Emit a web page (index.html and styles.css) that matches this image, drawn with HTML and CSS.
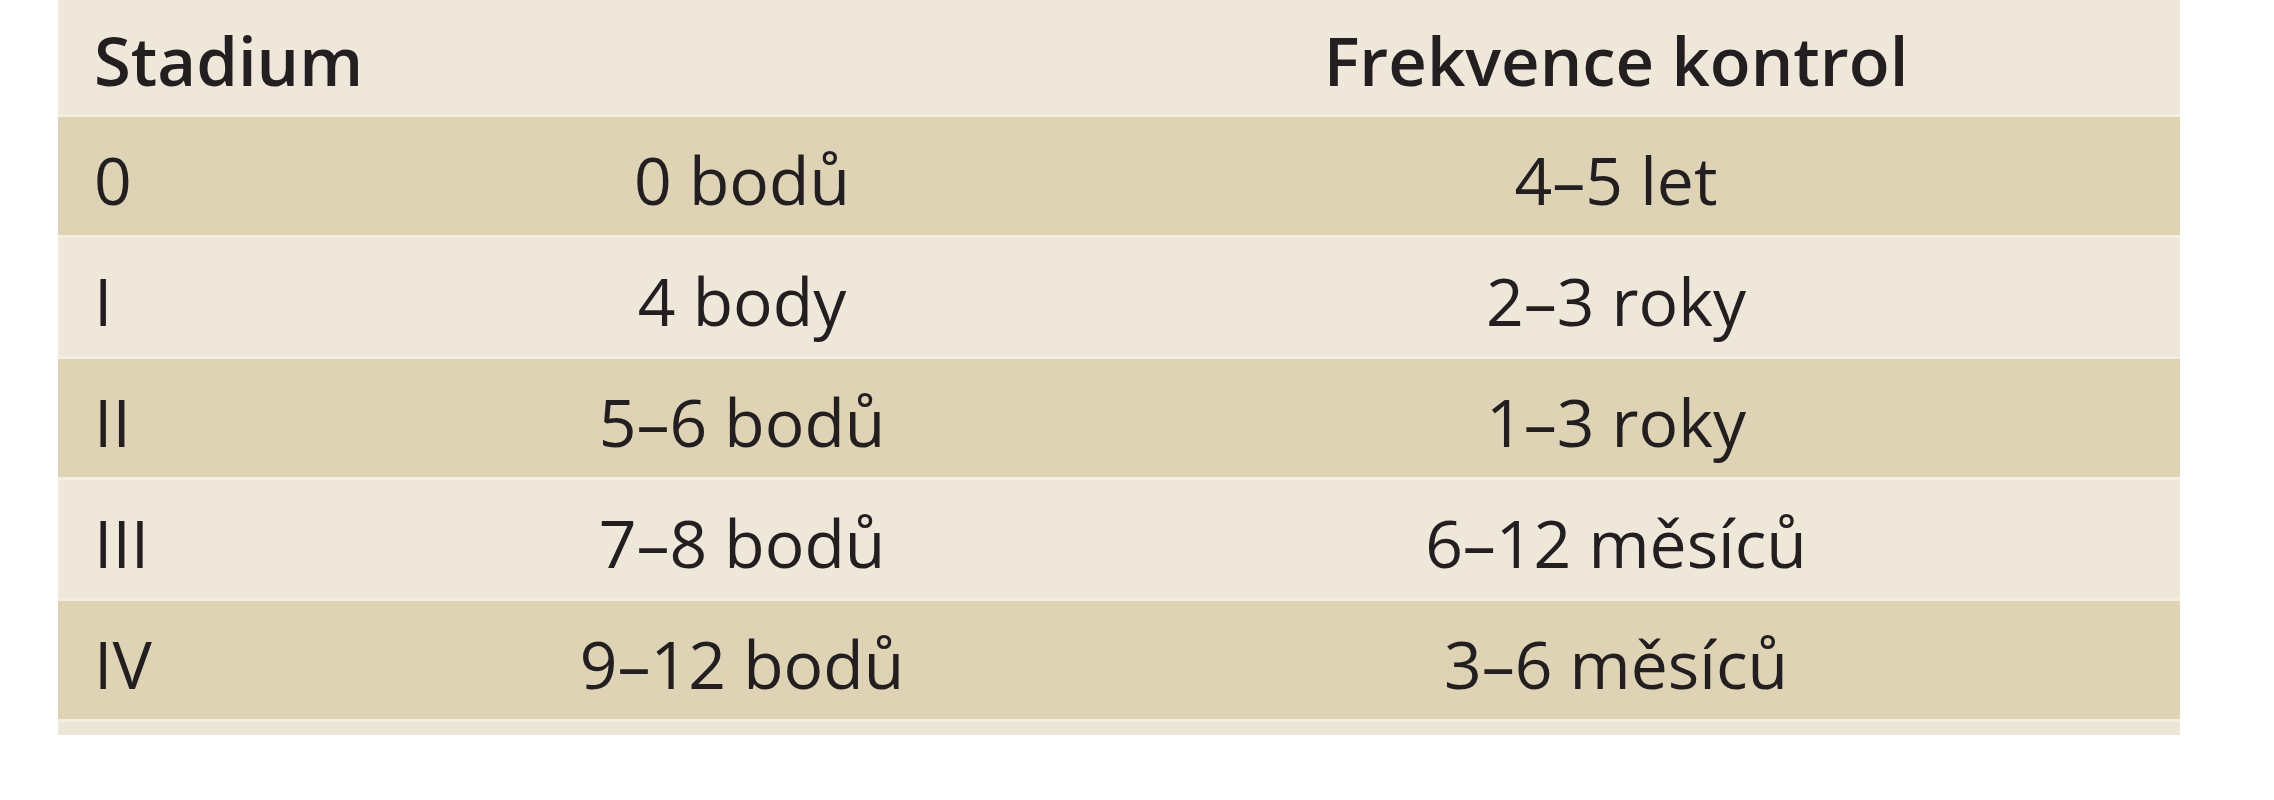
FILE: index.html
```html
<!DOCTYPE html>
<html lang="cs">
<head>
<meta charset="utf-8">
<title>Stadium – frekvence kontrol</title>
<link rel="stylesheet" href="styles.css">
</head>
<body>
<table class="grid">
  <colgroup>
    <col class="c1">
    <col class="c2">
    <col class="c3">
  </colgroup>
  <thead>
    <tr class="head">
      <th class="left">Stadium</th>
      <th></th>
      <th class="center">Frekvence kontrol</th>
    </tr>
  </thead>
  <tbody>
    <tr class="dark">
      <td class="left">0</td>
      <td class="center">0 bodů</td>
      <td class="center">4–5 let</td>
    </tr>
    <tr class="light">
      <td class="left">I</td>
      <td class="center">4 body</td>
      <td class="center">2–3 roky</td>
    </tr>
    <tr class="dark">
      <td class="left">II</td>
      <td class="center">5–6 bodů</td>
      <td class="center">1–3 roky</td>
    </tr>
    <tr class="light">
      <td class="left">III</td>
      <td class="center">7–8 bodů</td>
      <td class="center">6–12 měsíců</td>
    </tr>
    <tr class="dark">
      <td class="left">IV</td>
      <td class="center">9–12 bodů</td>
      <td class="center">3–6 měsíců</td>
    </tr>
    <tr class="foot">
      <td colspan="3"></td>
    </tr>
  </tbody>
</table>
</body>
</html>
```
FILE: styles.css
```css
html, body {
  margin: 0;
  padding: 0;
  background: #ffffff;
}

.grid {
  margin-left: 58px;
  width: 2122px;
  border-collapse: collapse;
  table-layout: fixed;
  font-family: "Open Sans", "Noto Sans", sans-serif;
  color: #231f20;
}

.c1 { width: 374px; }
.c2 { width: 620px; }
.c3 { width: 1128px; }

.grid th,
.grid td {
  padding: 8px 0 0 0;
  vertical-align: middle;
  white-space: nowrap;
  box-sizing: border-box;
}

.grid .left {
  text-align: left;
  padding-left: 36px;
}

.center {
  text-align: center;
}

.head th {
  height: 115px;
  background: #efe8da;
  font-size: 67px;
  font-weight: 600;
  line-height: 1.36;
}

.grid tbody td {
  height: 121px;
  border-top: 3px solid #f3eee2;
  font-size: 66px;
  font-weight: 400;
  line-height: 1.36;
}

.dark td {
  background: #ded3b5;
}

.light td {
  background: #efe8da;
}

.grid .foot td {
  height: 15px;
  padding: 0;
  background: #ece6d9;
}
```
